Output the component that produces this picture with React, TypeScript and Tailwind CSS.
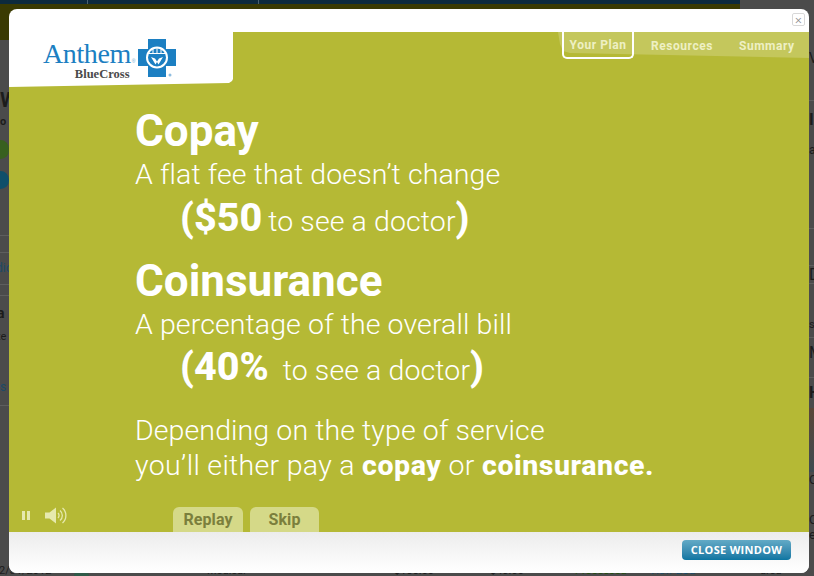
const Logo = () => (
    <div className="flex items-start gap-[2px]">
        <div className="flex flex-col items-end pt-[1px]">
            <div className="flex items-end">
                <span className="font-['Liberation_Serif',serif] text-[28px] leading-[26px] tracking-[-0.4px] text-[#1c7fc2]">Anthem</span>
                <span className="mb-[3px] ml-[1px] font-['Liberation_Sans',sans-serif] text-[5px] leading-[5px] text-[#6aa6d2]">®</span>
            </div>
            <span className="pr-[6px] font-['Liberation_Serif',serif] text-[12.500px] font-bold leading-[14px] text-[#4a4a4a]">BlueCross</span>
        </div>
        <svg width="38" height="38" viewBox="0 0 38 38" className="-mt-[1px]">
            <path d="M10 0h18v10h10v17H28v11H10V27H0V10h10z" fill="#1c7fc2" />
            <circle cx="19" cy="18.500" r="10" fill="none" stroke="#fff" strokeWidth="2" />
            <path d="M10 14.500h18M15 9.500v5M19 8.500v6M23 9.500v5" stroke="#fff" strokeWidth="1" />
            <path d="M13 18l4 1.500 2 3 2-3 4-1.500-4.500 7.500-1.500-2.500-1.500 2.500z" fill="#fff" />
            <circle cx="32" cy="36" r="1.500" fill="#8fbde0" />
        </svg>
    </div>
);

const Speaker = () => (
    <svg width="22" height="17" viewBox="0 0 22 17" fill="none">
        <path d="M0 5.500h4.500L11 .5v16l-6.500-5H0z" fill="#e6e9ad" />
        <path d="M13 6a3.500 3.500 0 0 1 0 5M15 3.500a6.500 6.500 0 0 1 0 10M17.500 1a10 10 0 0 1 0 15" stroke="#e6e9ad" strokeWidth="1.300" />
    </svg>
);

const Line = ({ children, className = "" }: { children: React.ReactNode; className?: string }) => (
    <p className={`text-[28.500px] leading-[36px] font-light tracking-[0.1px] ${className}`}>{children}</p>
);

const Amount = ({ value, gap, className = "" }: { value: string; gap: string; className?: string }) => (
    <Line className={`flex h-[46px] items-baseline pl-[45px] ${className}`}>
        <span className="text-[39.500px] font-extrabold tracking-normal">({value}</span>
        <span className={gap}>to see a doctor</span>
        <span className="text-[39.500px] font-extrabold">)</span>
    </Line>
);

const Rule = ({ className = "" }: { className?: string }) => <div className={`h-px bg-[#5e5e5e] ${className}`} />;

const App = () => {
    return (
        <div className="relative h-[576px] w-[814px] overflow-hidden bg-[#4b4b4b] font-['Roboto',sans-serif] text-[#1c1c1c]">
            {/* dimmed page behind the modal */}
            <div className="flex h-[4px] bg-[#0d2a3d]">
                <div className="w-[88px] border-r border-[#4b6270]" />
                <div className="w-[171px] border-r border-[#4b6270]" />
                <div className="flex-1" />
                <div className="w-[74px] bg-[#4b4b4b]" />
            </div>
            <div className="flex h-[36px]">
                <div className="flex-1 bg-[#3a3a02]" />
                <div className="w-[74px] bg-[#4b4b4b]" />
            </div>

            <div className="flex h-[520px] justify-between">
                <div className="w-[9px] overflow-hidden whitespace-nowrap">
                    <p className="mt-[48px] text-[20px] font-bold leading-[24px]">W</p>
                    <p className="mt-[4px] text-[11px] font-bold leading-[12px]">o</p>
                    <div className="-ml-[8px] mt-[12px] h-[19px] w-[17px] rounded-full bg-[#38601f]" />
                    <div className="-ml-[8px] mt-[12px] h-[18px] w-[17px] rounded-full bg-[#0f4f6a]" />
                    <Rule className="mt-[46px]" />
                    <Rule className="mt-[16px]" />
                    <p className="-ml-[4px] mt-[8px] text-[12px] leading-[14px] text-[#1d4a66]">dic</p>
                    <Rule className="mt-[9px]" />
                    <Rule className="mt-[10px]" />
                    <p className="-ml-[8px] mt-[9px] text-[14px] font-bold leading-[16px]">ra</p>
                    <p className="-ml-[9px] mt-[9px] text-[11px] leading-[14px]">ate</p>
                    <p className="mt-[36px] text-[12px] leading-[14px] text-[#1d4a66]">s</p>
                    <Rule className="mt-[11px]" />
                </div>
                <div className="w-[5px] overflow-hidden whitespace-nowrap">
                    <p className="mt-[10px] text-[14px] leading-[16px]">V</p>
                    <Rule className="mt-[34px]" />
                    <p className="mt-[10px] text-[16px] font-bold leading-[18px]">II</p>
                    <p className="mt-[14px] text-[12px] leading-[14px]">a</p>
                    <Rule className="mt-[71px]" />
                    <Rule className="mt-[36px]" />
                    <p className="mt-[1px] text-[16px] leading-[16px]">D</p>
                    <Rule />
                    <p className="mt-[34px] text-[11px] leading-[14px]">s</p>
                    <Rule className="mt-[5px]" />
                    <p className="mt-[6px] text-[16px] leading-[18px]">M</p>
                    <Rule className="mt-[15px]" />
                    <p className="mt-[6px] text-[16px] font-bold leading-[18px]">H</p>
                    <div className="mt-[6px] h-[64px] bg-gradient-to-b from-[#5a4638] to-[#3e4a50]" />
                    <p className="text-[13px] leading-[16px]">C</p>
                    <p className="mt-[24px] text-[13px] leading-[16px]">C</p>
                    <p className="text-[13px] leading-[14px]">e</p>
                </div>
            </div>

            <div className="flex h-[16px] items-end overflow-hidden whitespace-nowrap text-[11px] leading-[10px]">
                <span className="-ml-[1px] w-[75px]">2/31/2012</span>
                <span className="h-[4px] w-[15px] rounded-t-full bg-[#2f5a48]" />
                <span className="ml-[118px] w-[187px]">Medical</span>
                <span className="w-[96px]">$155.00</span>
                <span className="w-[85px]">$40.00</span>
                <span className="w-[74px] text-[#254d10]">Processed</span>
                <span className="w-[111px] text-[#1d4a66]">View EOB</span>
                <span>area</span>
            </div>

            {/* modal */}
            <div className="absolute left-[9px] top-[9px] flex h-[564px] w-[800px] flex-col overflow-hidden rounded-[8px] bg-white">
                <div className="flex h-[23px] shrink-0 justify-end pr-[4px] pt-[4px]">
                    <button className="flex h-[13px] w-[13px] items-center justify-center rounded-[2px] border border-[#d8d8d8] text-[13px] font-light leading-none text-[#888]">×</button>
                </div>

                <div className="relative flex-1 bg-[#b5b935] text-white">
                    <div className="absolute left-0 top-0 h-[55px] w-[224px] bg-white pl-[34px] pt-[8px] [clip-path:polygon(0_0,224px_0,224px_47px,223px_49px,220px_51px,0_55px)]">
                        <Logo />
                    </div>

                    <div className="absolute right-0 top-0 h-[26px] w-[251px] bg-[#c4c75c] [clip-path:polygon(0_0,100%_0,100%_26px,12px_21px,5px_19px,2px_12px)]" />
                    <div className="absolute right-0 top-0 flex h-[27px] w-[247px] items-start text-[12px] font-bold tracking-[0.55px] text-[#eef0c4]">
                        <span className="flex h-[27px] w-[72px] items-center justify-center rounded-b-[5px] border-2 border-t-0 border-white">Your Plan</span>
                        <span className="ml-[17px] pt-[5px]">Resources</span>
                        <span className="ml-[26px] pt-[5px]">Summary</span>
                    </div>

                    <div className="pl-[126px] pt-[74px]">
                        <h2 className="text-[44px] font-bold leading-[50px]">Copay</h2>
                        <Line className="mt-[1px]">A flat fee that doesn’t change</Line>
                        <Amount value="$50" gap="ml-[6px]" className="mt-[7px]" />
                        <h2 className="mt-[10px] text-[44px] font-bold leading-[50px]">Coinsurance</h2>
                        <Line className="mt-[1px]">A percentage of the overall bill</Line>
                        <Amount value="40%" gap="ml-[14px]" className="mt-[6px]" />
                        <Line className="mt-[18px]">Depending on the type of service</Line>
                        <Line className="-mt-[1px] tracking-[0.3px]">you’ll either pay a <b className="font-extrabold tracking-[0.55px]">copay</b> or <b className="font-extrabold tracking-[0.55px]">coinsurance.</b></Line>
                    </div>

                    <div className="absolute inset-x-0 bottom-0 flex h-[25px] items-end">
                        <div className="mb-[8px] ml-[13px] flex items-center gap-[15px]">
                            <span className="flex gap-[2px]">
                                <i className="block h-[9px] w-[3px] bg-[#e6e9ad]" />
                                <i className="block h-[9px] w-[3px] bg-[#e6e9ad]" />
                            </span>
                            <Speaker />
                        </div>
                        <div className="ml-[106px] flex gap-[7px] text-[16px] font-bold tracking-[0.1px] text-[#7b7f3c]">
                            <span className="flex h-[25px] w-[70px] items-center justify-center rounded-t-[6px] bg-[#d5d988]">Replay</span>
                            <span className="flex h-[25px] w-[69px] items-center justify-center rounded-t-[6px] bg-[#d5d988]">Skip</span>
                        </div>
                    </div>
                </div>

                <div className="flex h-[41px] shrink-0 items-start justify-end bg-gradient-to-b from-[#ececec] via-[#f8f8f8] via-60% to-white pr-[18px] pt-[8px]">
                    <button className="flex h-[20px] w-[109px] items-center justify-center rounded-[4px] bg-gradient-to-b from-[#62aac6] to-[#0a76a2] font-['Open_Sans',sans-serif] text-[11px] font-bold tracking-[0.3px] text-white">CLOSE WINDOW</button>
                </div>
            </div>
        </div>
    );
};

export default App;
